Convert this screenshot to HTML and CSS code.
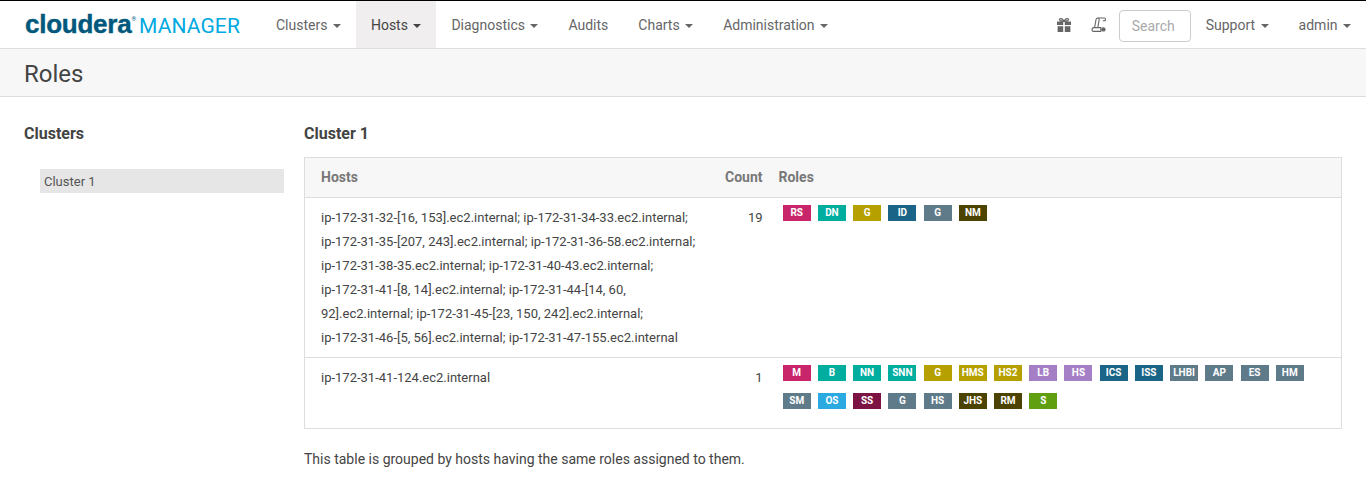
FILE: index.html
```html
<!DOCTYPE html>
<html lang="en">
<head>
    <meta charset="UTF-8">
    <meta name="viewport" content="width=device-width, initial-scale=1.0">
    <title>Roles</title>
    <link rel="stylesheet" href="styles.css">
</head>
<body>
  <nav class="navbar">
    <a class="brand" href="#"><span class="brand-name">cloudera</span><span class="brand-reg">®</span><span class="brand-product">MANAGER</span></a>
    <ul class="nav">
      <li><a href="#">Clusters <span class="caret"></span></a></li>
      <li class="active"><a href="#">Hosts <span class="caret"></span></a></li>
      <li><a href="#">Diagnostics <span class="caret"></span></a></li>
      <li><a href="#">Audits</a></li>
      <li><a href="#">Charts <span class="caret"></span></a></li>
      <li><a href="#">Administration <span class="caret"></span></a></li>
    </ul>
    <div class="nav-right">
      <a class="icon-link" href="#">
        <svg width="16" height="16" viewBox="0 0 16 16">
          <path fill="#666" d="M1 4.5h6.2v3.6H1zM8.8 4.5H15v3.6H8.8zM1.6 9.2h5.6V15H1.6zM8.8 9.2h5.6V15H8.8z"/>
          <path fill="none" stroke="#666" stroke-width="1.3" d="M8 4.4C6.6 1.4 3.6.9 3.6 2.6c0 1.4 2.4 1.8 4.4 1.8zM8 4.4c1.4-3 4.4-3.5 4.4-1.8 0 1.4-2.4 1.8-4.4 1.8z"/>
        </svg>
      </a>
      <a class="icon-link icon-last" href="#">
        <svg width="16" height="16" viewBox="0 0 16 16" fill="none" stroke="#666" stroke-width="1.1">
          <path d="M3.6 10.6 5 2.6C5.2 1.6 5.8 1 6.8 1h6.4c1 0 1.4.8 1.2 1.6l-.2 1.2h-2.4"/>
          <path d="M6.8 1c1 0 1.5.8 1.3 1.8L6.8 10.6"/>
          <path d="M1 13.2c0-1.6.6-2.6 1.8-2.6h7v3.8H2.4C1.6 14.4 1 14 1 13.2z"/>
          <circle cx="12.4" cy="12.4" r="2.2" fill="#666" stroke="none"/>
        </svg>
      </a>
      <input class="search" placeholder="Search">
      <ul class="nav">
        <li><a href="#">Support <span class="caret"></span></a></li>
        <li><a href="#">admin <span class="caret"></span></a></li>
      </ul>
    </div>
  </nav>

  <div class="page-title">
    <h1>Roles</h1>
  </div>

  <div class="content">
    <div class="sidebar">
      <h4>Clusters</h4>
      <a class="side-item" href="#">Cluster 1</a>
    </div>
    <div class="main">
      <h4>Cluster 1</h4>
      <table class="roles-table">
        <thead>
          <tr>
            <th class="col-hosts">Hosts</th>
            <th class="col-count">Count</th>
            <th class="col-roles">Roles</th>
          </tr>
        </thead>
        <tbody>
          <tr>
            <td class="col-hosts">
              <span class="nb">ip-172-31-32-[16,</span> <span class="nb">153].ec2.internal;</span>
              <span class="nb">ip-172-31-34-33.ec2.internal;</span>
              <span class="nb">ip-172-31-35-[207,</span> <span class="nb">243].ec2.internal;</span>
              <span class="nb">ip-172-31-36-58.ec2.internal;</span>
              <span class="nb">ip-172-31-38-35.ec2.internal;</span>
              <span class="nb">ip-172-31-40-43.ec2.internal;</span>
              <span class="nb">ip-172-31-41-[8,</span> <span class="nb">14].ec2.internal;</span>
              <span class="nb">ip-172-31-44-[14,</span> <span class="nb">60,</span> <span class="nb">92].ec2.internal;</span>
              <span class="nb">ip-172-31-45-[23,</span> <span class="nb">150,</span> <span class="nb">242].ec2.internal;</span>
              <span class="nb">ip-172-31-46-[5,</span> <span class="nb">56].ec2.internal;</span>
              <span class="nb">ip-172-31-47-155.ec2.internal</span>
            </td>
            <td class="col-count">19</td>
            <td class="col-roles">
              <div class="badges">
                <span class="badge pink">RS</span>
                <span class="badge teal">DN</span>
                <span class="badge gold">G</span>
                <span class="badge blue">ID</span>
                <span class="badge slate">G</span>
                <span class="badge olive">NM</span>
              </div>
            </td>
          </tr>
          <tr class="row-tall">
            <td class="col-hosts">ip-172-31-41-124.ec2.internal</td>
            <td class="col-count">1</td>
            <td class="col-roles">
              <div class="badges">
                <span class="badge pink">M</span>
                <span class="badge teal">B</span>
                <span class="badge teal">NN</span>
                <span class="badge teal">SNN</span>
                <span class="badge gold">G</span>
                <span class="badge gold">HMS</span>
                <span class="badge gold">HS2</span>
                <span class="badge purple">LB</span>
                <span class="badge purple">HS</span>
                <span class="badge blue">ICS</span>
                <span class="badge blue">ISS</span>
                <span class="badge slate">LHBI</span>
                <span class="badge slate">AP</span>
                <span class="badge slate">ES</span>
                <span class="badge slate">HM</span>
                <span class="badge slate">SM</span>
                <span class="badge sky">OS</span>
                <span class="badge maroon">SS</span>
                <span class="badge slate">G</span>
                <span class="badge slate">HS</span>
                <span class="badge olive">JHS</span>
                <span class="badge olive">RM</span>
                <span class="badge green">S</span>
              </div>
            </td>
          </tr>
        </tbody>
      </table>
      <p class="note">This table is grouped by hosts having the same roles assigned to them.</p>
    </div>
  </div>
</body>
</html>
```

FILE: styles.css
```css
* {
  margin: 0;
  padding: 0;
  box-sizing: border-box;
}

body {
  font-family: Roboto, "Liberation Sans", sans-serif;
  font-size: 14px;
  line-height: 24px;
  color: #444;
  background-color: #fff;
}

a {
  color: inherit;
  text-decoration: none;
}

ul {
  list-style: none;
}

/* top bar */
.navbar {
  display: flex;
  align-items: stretch;
  height: 49px;
  padding-left: 25px;
  border-top: 1px solid #000;
  border-bottom: 1px solid #ddd;
}

.brand {
  display: flex;
  align-items: baseline;
  width: 236px;
  padding-top: 5px;
  white-space: nowrap;
}

.brand-name {
  font-family: "Liberation Sans", sans-serif;
  font-size: 26px;
  font-weight: 700;
  line-height: 36px;
  letter-spacing: -0.25px;
  color: #00587c;
  -webkit-text-stroke: 0.4px #00587c;
}

.brand-reg {
  font-size: 6px;
  line-height: 6px;
  color: #00587c;
  align-self: flex-start;
  margin-top: 10px;
}

.brand-product {
  font-size: 21px;
  line-height: 36px;
  letter-spacing: 0.1px;
  color: #00a9e0;
  margin-left: 3px;
}

.nav {
  display: flex;
}

.nav li {
  display: flex;
}

.nav a {
  display: block;
  padding: 1px 15px 0;
  line-height: 47px;
  color: #666;
  white-space: nowrap;
}

.nav .active a {
  background-color: #f0eeee;
  color: #444;
}

.caret {
  display: inline-block;
  margin-left: 2px;
  vertical-align: middle;
  border-top: 4px solid;
  border-left: 4px solid transparent;
  border-right: 4px solid transparent;
}

.nav-right {
  display: flex;
  align-items: stretch;
  margin-left: auto;
}

.icon-link {
  display: flex;
  align-items: center;
  margin-right: 19px;
}

.icon-last {
  margin-right: 12px;
}

.search {
  align-self: center;
  width: 72px;
  height: 32px;
  padding: 0 12px;
  margin-top: 3px;
  font-family: inherit;
  font-size: 14px;
  border: 1px solid #ccc;
  border-radius: 4px;
  outline: none;
}

.search::placeholder {
  color: #aaa;
}

.page-title {
  height: 48px;
  padding-left: 24px;
  background-color: #f7f7f7;
  border-bottom: 1px solid #ddd;
}

.page-title h1 {
  font-size: 24px;
  font-weight: 400;
  line-height: 51px;
  color: #444;
}

/* body columns */
.content {
  display: flex;
  padding: 25px 24px 0;
}

.sidebar {
  width: 280px;
  flex-shrink: 0;
}

h4 {
  font-size: 16px;
  font-weight: 700;
  line-height: 24px;
  color: #444;
}

.side-item {
  display: block;
  height: 24px;
  margin: 23px 20px 0 16px;
  padding-left: 4px;
  font-size: 13px;
  line-height: 25px;
  background-color: #e6e6e6;
  color: #555;
}

.main {
  flex: 1;
}

.roles-table {
  width: 100%;
  margin-top: 11px;
  border: 1px solid #ddd;
  border-collapse: collapse;
  table-layout: fixed;
}

.roles-table th {
  height: 40px;
  padding-bottom: 1px;
  font-weight: 700;
  text-align: left;
  color: #777;
  background-color: #f7f7f7;
  border-bottom: 1px solid #ddd;
  vertical-align: middle;
}

.roles-table td {
  padding: 8px 0 7px;
  font-size: 13px;
  vertical-align: top;
  border-bottom: 1px solid #ddd;
}

.nb {
  white-space: nowrap;
}

.roles-table th.col-hosts,
.roles-table td.col-hosts {
  width: 404px;
  padding-left: 16px;
  padding-right: 8px;
}

.roles-table th.col-count,
.roles-table td.col-count {
  width: 54px;
  text-align: right;
}

.roles-table th.col-roles,
.roles-table td.col-roles {
  padding-left: 16px;
  padding-right: 16px;
}

.row-tall td {
  height: 71px;
}

.badges {
  display: flex;
  flex-wrap: wrap;
  gap: 12px 7.22px;
  margin: -1px 0 0 4.2px;
}

.badge {
  width: 28px;
  height: 16px;
  font-size: 10px;
  font-weight: 700;
  line-height: 16px;
  text-align: center;
  color: #fff;
}

.pink { background-color: #c9256a; }
.teal { background-color: #00ad9f; }
.gold { background-color: #b5a000; }
.blue { background-color: #1a6587; }
.slate { background-color: #5f7b8a; }
.olive { background-color: #4d4300; }
.purple { background-color: #a57fc6; }
.sky { background-color: #2ba9e1; }
.maroon { background-color: #7c1342; }
.green { background-color: #5f9f10; }

.note {
  margin-top: 18px;
}
```
